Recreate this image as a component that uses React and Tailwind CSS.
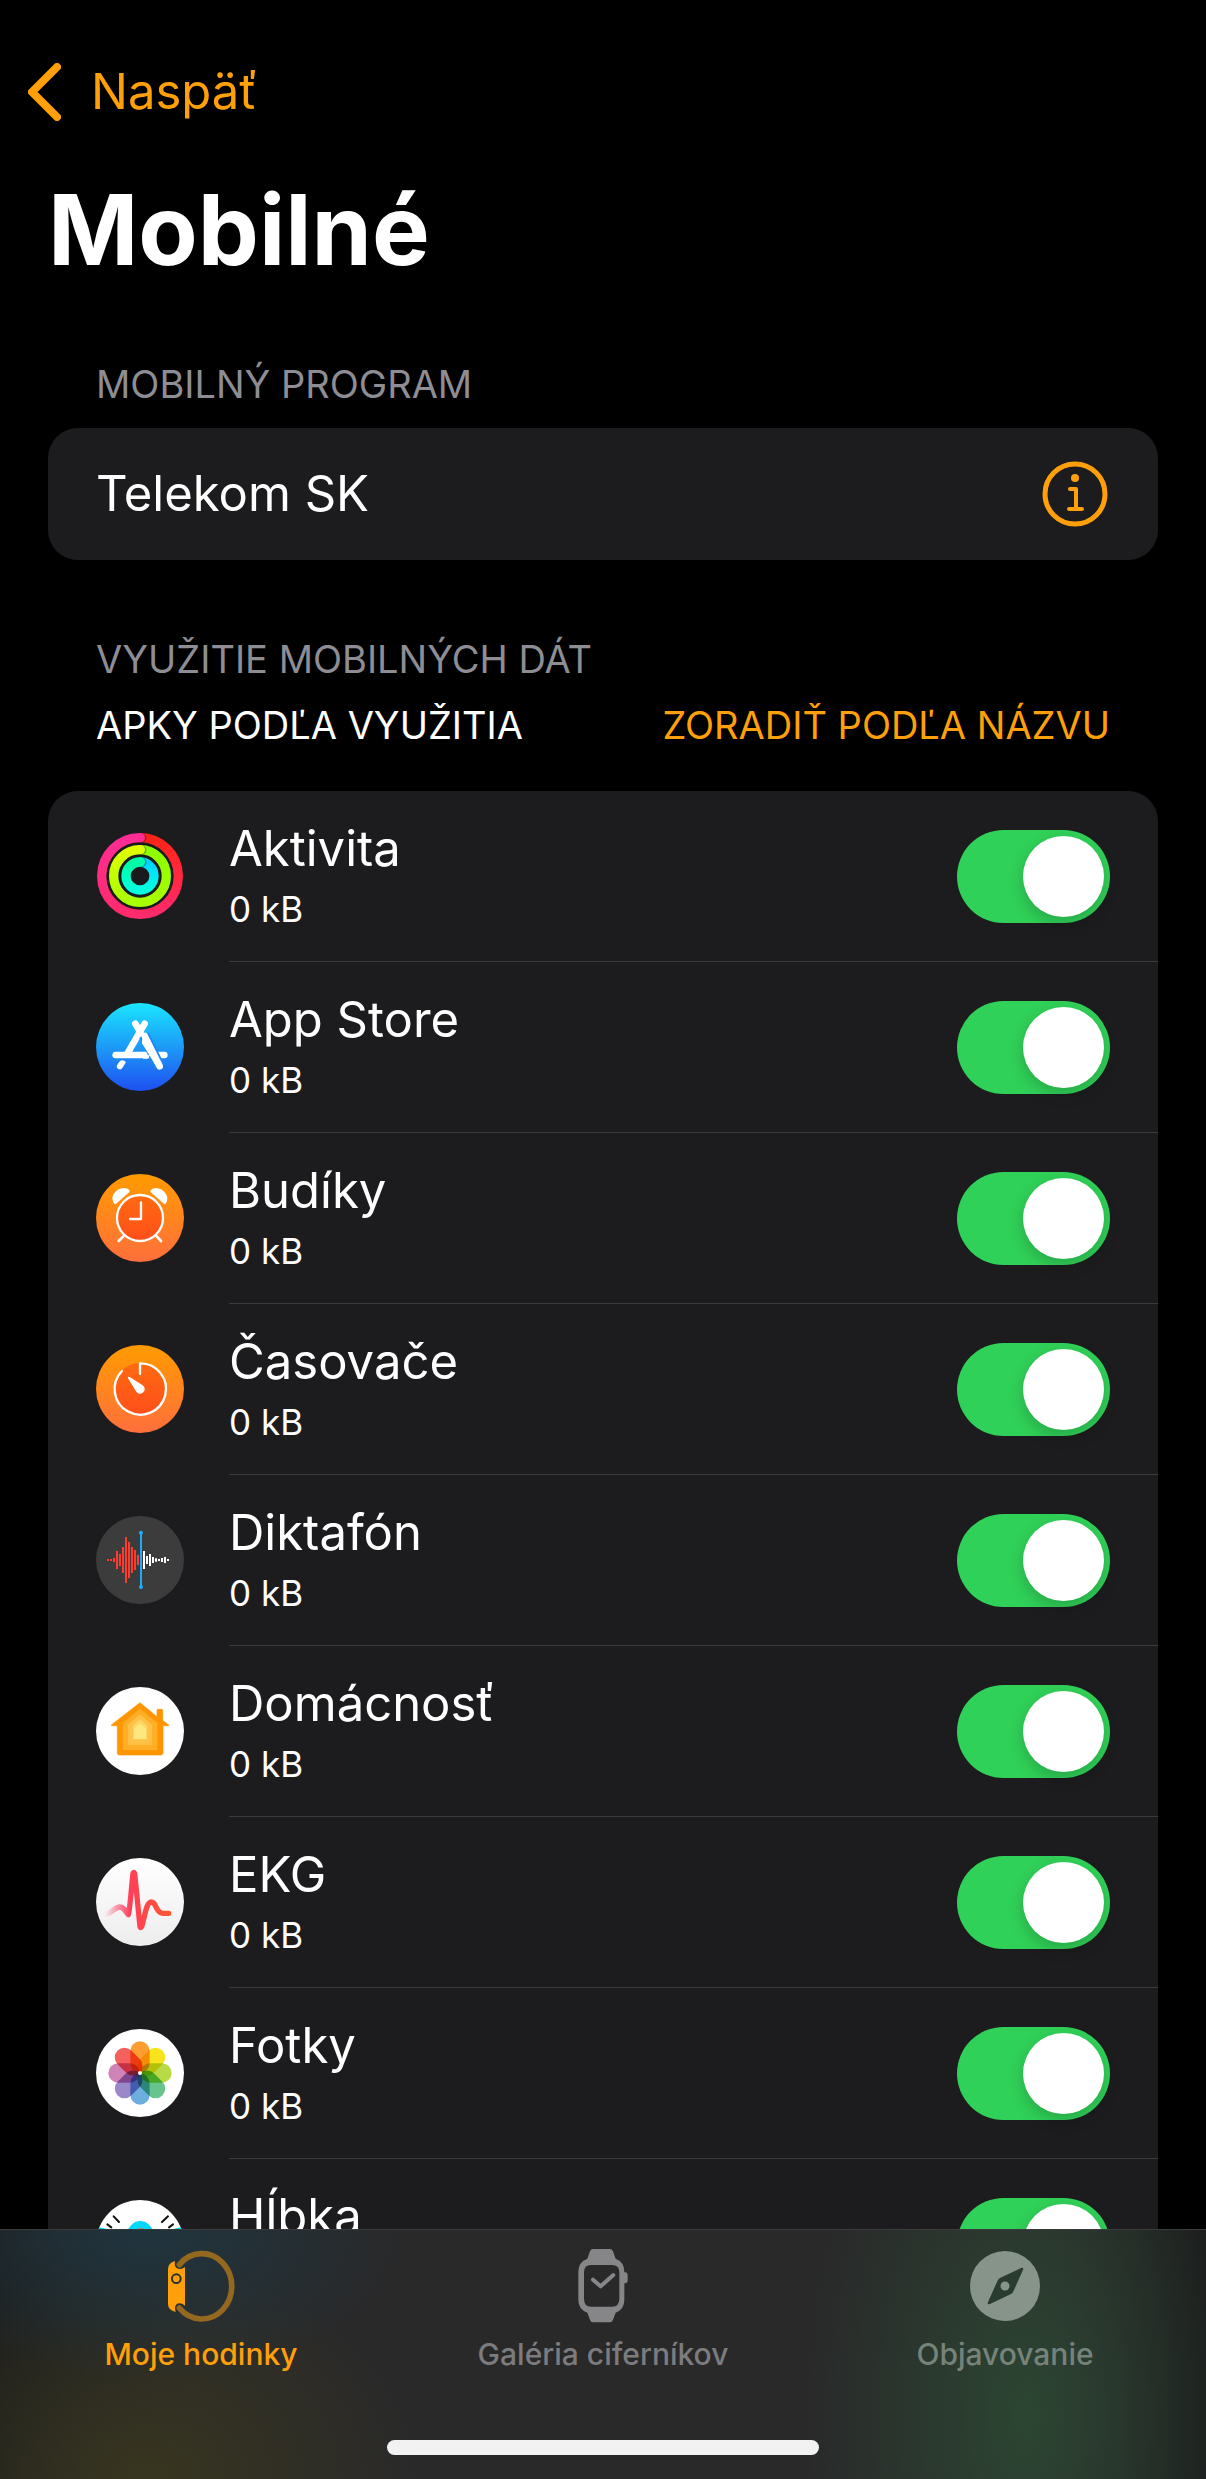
import React, { useState } from "react";

function ActivityIcon() {
  const rings = [
    { r: 115, right: "url(#moveR)", left: "url(#moveL)", cap: "#ff2d92" },
    { r: 79, right: "url(#exR)", left: "url(#exL)", cap: "#e0ff00" },
    { r: 42, right: "url(#stR)", left: "url(#stL)", cap: "#00ffa9" },
  ];
  return (
    <svg viewBox="168 156 264 264" className="size-full" aria-hidden="true">
      <defs>
        <linearGradient id="moveR" x1="0" y1="0" x2="0" y2="1">
          <stop offset="0" stopColor="#ff2417" />
          <stop offset="1" stopColor="#ff2b6c" />
        </linearGradient>
        <linearGradient id="moveL" x1="0" y1="0" x2="0" y2="1">
          <stop offset="0" stopColor="#ff2d95" />
          <stop offset="1" stopColor="#ff2b6c" />
        </linearGradient>
        <linearGradient id="exR" x1="0" y1="0" x2="0" y2="1">
          <stop offset="0" stopColor="#8cff00" />
          <stop offset="1" stopColor="#a8ff00" />
        </linearGradient>
        <linearGradient id="exL" x1="0" y1="0" x2="0" y2="1">
          <stop offset="0" stopColor="#e0ff00" />
          <stop offset="1" stopColor="#a8ff00" />
        </linearGradient>
        <linearGradient id="stR" x1="0" y1="0" x2="0" y2="1">
          <stop offset="0" stopColor="#00d4ff" />
          <stop offset="1" stopColor="#00ffe0" />
        </linearGradient>
        <linearGradient id="stL" x1="0" y1="0" x2="0" y2="1">
          <stop offset="0" stopColor="#00ffa0" />
          <stop offset="1" stopColor="#00ffe0" />
        </linearGradient>
      </defs>
      <circle cx="300" cy="288" r="129" fill="#1a1a1c" />
      {rings.map(({ r, right, left, cap }) => (
        <g key={r}>
          <path d={`M300 ${288 - r}A${r} ${r} 0 0 1 300 ${288 + r}`} fill="none" stroke={right} strokeWidth="28" />
          <path d={`M300 ${288 + r}A${r} ${r} 0 0 1 300 ${288 - r}`} fill="none" stroke={left} strokeWidth="28" />
          <circle cx="306" cy={289 - r} r="14" fill="#000" opacity=".28" />
          <circle cx="301" cy={288 - r} r="14" fill={cap} />
        </g>
      ))}
    </svg>
  );
}

function AppStoreIcon() {
  return (
    <svg viewBox="168 669 264 264" className="size-full" aria-hidden="true">
      <defs>
        <linearGradient id="store" x1="0" y1="0" x2="0" y2="1">
          <stop offset="0" stopColor="#1be5ff" />
          <stop offset="1" stopColor="#1e4ff0" />
        </linearGradient>
      </defs>
      <circle cx="300" cy="801" r="132" fill="url(#store)" />
      <g fill="none" stroke="#fff" strokeWidth="20" strokeLinecap="round">
        <path d="M227 825H373" />
        <path d="M314 731L262 821" />
        <path d="M286 731L301 757" />
      </g>
      <path d="M312 766L359 860" stroke="#1d86f7" strokeWidth="32" />
      <path d="M309 826L330 826L322 836H309Z" fill="#fff" />
      <path d="M314 768L359 859" stroke="#fff" strokeWidth="20" strokeLinecap="round" />
      <path d="M319 765L366 855L353 866L306 790Q304 772 319 765Z" fill="#fff" />
      <path d="M238 845Q247 836 258 846L247 864A9 9 0 0 1 231 856Z" fill="#fff" />
    </svg>
  );
}

function WarmGradient({ id }) {
  return (
    <defs>
      <linearGradient id={id} x1="0" y1="0" x2="0" y2="1">
        <stop offset="0" stopColor="#ff9b00" />
        <stop offset="1" stopColor="#ff6f3c" />
      </linearGradient>
      <linearGradient id={id + "Face"} x1="0" y1="0" x2="0" y2="1">
        <stop offset="0" stopColor="#ff6a10" />
        <stop offset="1" stopColor="#ff4f1a" />
      </linearGradient>
    </defs>
  );
}

function AlarmIcon() {
  return (
    <svg viewBox="48 72 264 264" className="size-full" aria-hidden="true">
      <WarmGradient id="alarm" />
      <circle cx="180" cy="204" r="132" fill="url(#alarm)" />
      <g stroke="#fff" strokeLinecap="round" fill="none">
        <path d="M132 257L116 273M228 257L243 273" strokeWidth="8" />
        <circle cx="180" cy="204" r="69" fill="url(#alarmFace)" strokeWidth="7" />
        <path d="M183 157V207H150" strokeWidth="7" strokeLinejoin="round" />
      </g>
      <path d="M104 162Q92 148 101 132Q112 114 132 114Q144 114 149 122Q150 126 145 129L110 160Q107 164 104 162Z" fill="#fff" />
      <path d="M256 162Q267 148 258 132Q247 114 227 114Q216 114 211 122Q210 126 215 129L250 160Q253 164 256 162Z" fill="#fff" />
    </svg>
  );
}

function TimerIcon() {
  return (
    <svg viewBox="48 75 264 264" className="size-full" aria-hidden="true">
      <WarmGradient id="timer" />
      <circle cx="180" cy="207" r="132" fill="url(#timer)" />
      <circle cx="180" cy="207" r="78" fill="url(#timerFace)" />
      <path d="M180 162V130A77 77 0 1 1 126 153" fill="none" stroke="#fff" strokeWidth="7" strokeLinecap="round" strokeLinejoin="round" />
      <path d="M144 171Q145 169 149 171L187 195Q197 203 193 213Q187 223 176 221Q169 219 166 211L144 175Z" fill="#fff" />
    </svg>
  );
}

function VoiceIcon() {
  const red = [[84, 3], [93, 3], [102, 6], [111, 27], [120, 18], [129, 39], [138, 69], [147, 54], [156, 39], [165, 30], [174, 15]];
  const white = [[192, 27], [201, 12], [210, 18], [219, 9], [228, 5], [237, 3], [246, 6], [255, 9], [264, 3]];
  return (
    <svg viewBox="48 588 264 264" className="size-full" aria-hidden="true">
      <circle cx="180" cy="720" r="132" fill="#3c3c3d" />
      {red.map(([x, h]) => <path key={x} d={`M${x} ${720 - h}V${720 + h}`} stroke="#ff3b30" strokeWidth="6" />)}
      {white.map(([x, h]) => <path key={x} d={`M${x} ${720 - h}V${720 + h}`} stroke="#fff" strokeWidth="6" />)}
      <path d="M183 638V801" stroke="#1badf8" strokeWidth="6" />
      <circle cx="183" cy="638" r="6" fill="#1badf8" />
      <circle cx="183" cy="801" r="6" fill="#1badf8" />
    </svg>
  );
}

function HomeIcon() {
  return (
    <svg viewBox="48 51 264 264" className="size-full" aria-hidden="true">
      <circle cx="180" cy="183" r="132" fill="#fff" />
      <g strokeLinejoin="round">
        <path d="M180 98L231 140V120Q231 118 233 118H246Q248 118 248 120V151L266 165Q267 167 264 167H249V249Q249 255 243 255H118Q112 255 112 249V167H96Q92 167 95 164Z" fill="#ff9500" stroke="#ff9500" strokeWidth="2" />
        <path d="M180 119L230 160V238H130V160Z" fill="#ffae28" stroke="#ffae28" strokeWidth="4" />
        <path d="M180 136L214 165V222H146V165Z" fill="#ffc247" stroke="#ffc247" strokeWidth="4" />
        <path d="M180 150L199 167V206H161V167Z" fill="#ffd564" stroke="#ffd564" strokeWidth="4" />
        <path d="M180 163L196 176V205H164V176Z" fill="#ffe780" stroke="#ffe780" strokeWidth="4" />
      </g>
    </svg>
  );
}

function EcgIcon() {
  return (
    <svg viewBox="48 564 264 264" className="size-full" aria-hidden="true">
      <defs>
        <linearGradient id="ecgBg" x1="0" y1="0" x2="0" y2="1">
          <stop offset="0" stopColor="#fff" />
          <stop offset="1" stopColor="#ededee" />
        </linearGradient>
        <linearGradient id="ecgLine" gradientUnits="userSpaceOnUse" x1="75" y1="0" x2="272" y2="0">
          <stop offset="0" stopColor="#ff4060" stopOpacity="0" />
          <stop offset=".2" stopColor="#ff4a68" stopOpacity=".6" />
          <stop offset=".38" stopColor="#ff3f58" />
          <stop offset="1" stopColor="#ff5730" />
        </linearGradient>
      </defs>
      <circle cx="180" cy="696" r="132" fill="url(#ecgBg)" />
      <path d="M80 732C97 728 105 711 119 711C132 711 135 724 145 734C150 715 154 655 159 610Q161 604 164 610L180 770Q182 775 185 770C194 744 198 696 214 696C230 696 226 730 250 730H266" fill="none" stroke="url(#ecgLine)" strokeWidth="16" strokeLinecap="round" strokeLinejoin="round" />
    </svg>
  );
}

function PhotosIcon() {
  const petals = ["#fb9d31", "#f8e31c", "#b8da45", "#67c48c", "#6caee0", "#9b88c8", "#cf83b6", "#f4605e"];
  return (
    <svg viewBox="48 57 264 264" className="isolate size-full" aria-hidden="true">
      <circle cx="180" cy="189" r="132" fill="#fff" />
      {petals.map((c, i) => (
        <rect key={c} x="151" y="94" width="58" height="94" rx="29" fill={c} transform={`rotate(${i * 45} 180 189)`} className="mix-blend-multiply" />
      ))}
      <circle cx="180" cy="189" r="6" fill="#fff" />
    </svg>
  );
}

function DepthIcon() {
  return (
    <svg viewBox="48 570 264 264" className="size-full" aria-hidden="true">
      <clipPath id="depthClip"><circle cx="180" cy="702" r="132" /></clipPath>
      <circle cx="180" cy="702" r="132" fill="#fff" />
      <g clipPath="url(#depthClip)">
        <path d="M48 650Q90 656 100 668H136C150 650 160 633 181 633C202 633 212 650 226 668H260Q270 656 312 650V834H48Z" fill="#00d8ff" />
        <circle cx="182" cy="664" r="11" fill="#8b8b8f" />
      </g>
      <path d="M101 619L117 636M264 619L246 636M82 643L94 652M279 643L267 652" stroke="#111" strokeWidth="6" strokeLinecap="round" />
    </svg>
  );
}

function WatchSideIcon() {
  return (
    <svg viewBox="36 54 228 228" className="size-[76px]" aria-hidden="true">
      <path d="M51 118Q51 98 72 93Q68 116 86 117Q95 117 102 111V227Q92 219 84 220Q68 222 74 246Q51 240 51 222Z" fill="#ff9f0a" />
      <circle cx="76" cy="146" r="13" fill="#ff9f0a" stroke="#27302f" strokeWidth="6" />
      <path d="M85 104A90 98 0 1 1 85 234" fill="none" stroke="#956820" strokeWidth="17" strokeLinecap="round" />
    </svg>
  );
}

function WatchFaceIcon() {
  return (
    <svg viewBox="17 54 228 228" className="size-[76px]" aria-hidden="true">
      <path fillRule="evenodd" fill="#868688" d="M101 57H151Q158 57 161 64L169 86Q195 96 195 125V127H197Q205 127 205 136V151Q205 160 197 160H195V210Q195 238 169 248L161 269Q158 277 151 277H101Q94 277 92 269L84 248Q57 238 57 210V125Q57 96 84 86L92 64Q95 57 101 57ZM95 105Q74 105 74 127V207Q74 230 95 230H158Q180 230 180 207V127Q180 105 158 105Z" />
      <path d="M101 149L124 169L162 135" fill="none" stroke="#868688" strokeWidth="12" strokeLinecap="round" strokeLinejoin="round" />
    </svg>
  );
}

function CompassIcon() {
  return (
    <svg viewBox="0 0 76 76" className="size-[76px]" aria-hidden="true">
      <circle cx="38" cy="38" r="35" fill="#86948a" />
      <path d="M54 20Q57 19 56 22L47 42Q46 45 44 46L23 56Q20 57 21 54L30 34Q31 31 33 30Z" fill="#2a3c2f" />
      <circle cx="38" cy="38" r="4.5" fill="#86948a" />
    </svg>
  );
}

const APPS = [
  ["Aktivita", ActivityIcon],
  ["App Store", AppStoreIcon],
  ["Budíky", AlarmIcon],
  ["Časovače", TimerIcon],
  ["Diktafón", VoiceIcon],
  ["Domácnosť", HomeIcon],
  ["EKG", EcgIcon],
  ["Fotky", PhotosIcon],
  ["Hĺbka", DepthIcon],
];

const TABS = [
  ["Moje hodinky", WatchSideIcon, "text-[#ff9f0a]"],
  ["Galéria ciferníkov", WatchFaceIcon, "text-[#7c7c7e]"],
  ["Objavovanie", CompassIcon, "text-[#76837a]"],
];

function AppRow({ name, Icon }) {
  const [on, setOn] = useState(true);
  const id = "app-" + name.replace(/\s/g, "-");
  return (
    <li className="flex h-[171px] pl-12">
      <div className="flex w-[133px] shrink-0 items-center pb-px">
        <div className="size-[88px]"><Icon /></div>
      </div>
      <div className="flex min-w-0 flex-1 items-center justify-between border-b border-[#3b3b3d] pr-12">
        <label htmlFor={id} className="flex flex-col gap-2 pb-[2px]">
          <span className="text-[49px] leading-[60px]">{name}</span>
          <span className="text-[35px] leading-[44px]">0 kB</span>
        </label>
        <input
          id={id}
          type="checkbox"
          role="switch"
          checked={on}
          onChange={() => setOn(!on)}
          className="h-[93px] w-[153px] shrink-0 appearance-none rounded-full bg-[#39393d] p-[6px] before:block before:size-[81px] before:rounded-full before:bg-white before:shadow-[0_6px_16px_rgba(0,0,0,0.2)] checked:bg-[#30d158] checked:before:ml-auto"
        />
      </div>
    </li>
  );
}

export default function App() {
  return (
    <div className="flex h-screen flex-col bg-black font-['Inter','Noto_Sans',sans-serif] text-white">
      <main className="min-h-0 flex-1 overflow-y-auto px-12 [scrollbar-width:none]">
        <button type="button" className="-ml-5 mt-[60px] flex h-16 items-center gap-[30px] text-[#ff9f0a]">
          <svg viewBox="0 0 33 58" className="h-[58px] w-[33px]" fill="none" stroke="currentColor" strokeWidth="8" strokeLinecap="round" strokeLinejoin="round" aria-hidden="true">
            <path d="M29 4L4 29L29 54" />
          </svg>
          <span className="text-[49px] leading-[60px]">Naspäť</span>
        </button>
        <h1 className="mt-[46px] text-[97px] leading-[120px] font-bold">Mobilné</h1>

        <section className="mt-[70px]">
          <h2 className="px-12 text-[38px] leading-[48px] text-[#8d8d93]">MOBILNÝ PROGRAM</h2>
          <div className="mt-5 flex h-[132px] items-center justify-between rounded-[30px] bg-[#1c1c1e] px-12">
            <span className="text-[49px] leading-[60px]">Telekom SK</span>
            <button type="button" aria-label="Informácie" className="text-[#ff9f0a]">
              <svg viewBox="0 0 72 72" className="size-[72px]" fill="none" stroke="currentColor" strokeWidth="5" strokeLinecap="round" strokeLinejoin="round" aria-hidden="true">
                <circle cx="37" cy="36" r="30" />
                <path d="M32 31H38V51M31 51H44" strokeWidth="4" />
                <circle cx="37" cy="20" r="4" fill="currentColor" stroke="none" />
              </svg>
            </button>
          </div>
        </section>

        <section className="mt-[75px]">
          <h2 className="px-12 text-[38px] leading-[48px] text-[#8d8d93]">VYUŽITIE MOBILNÝCH DÁT</h2>
          <div className="mt-[18px] flex items-center justify-between px-12 text-[38px] leading-[48px]">
            <h3>APKY PODĽA VYUŽITIA</h3>
            <button type="button" className="text-[#ff9f0a]">ZORADIŤ PODĽA NÁZVU</button>
          </div>
          <ul className="mt-[42px] overflow-hidden rounded-[30px] bg-[#1c1c1e]">
            {APPS.map(([name, Icon]) => <AppRow key={name} name={name} Icon={Icon} />)}
          </ul>
        </section>
      </main>

      <nav className="flex shrink-0 flex-col items-center border-t border-[#3b3b3d] bg-[#29292a] bg-[radial-gradient(ellipse_260px_150px_at_12%_0%,#20353f_0%,transparent_100%),radial-gradient(ellipse_280px_220px_at_12%_100%,#38351f_0%,transparent_100%),radial-gradient(ellipse_220px_420px_at_85%_75%,#2c4532_0%,transparent_100%),linear-gradient(to_right,#1c1d1d_0%,#29292a_16%,#29292a_88%,#1b1b1c_100%)] pb-6">
        <div className="grid w-full grid-cols-3 pt-[18px]">
          {TABS.map(([label, Icon, color]) => (
            <button key={label} type="button" className={"flex flex-col items-center gap-3 " + color}>
              <Icon />
              <span className="text-[30px] leading-[36px] font-medium">{label}</span>
            </button>
          ))}
        </div>
        <div className="mt-[68px] h-[15px] w-[432px] rounded-full bg-[#f2f2f2]" />
      </nav>
    </div>
  );
}
